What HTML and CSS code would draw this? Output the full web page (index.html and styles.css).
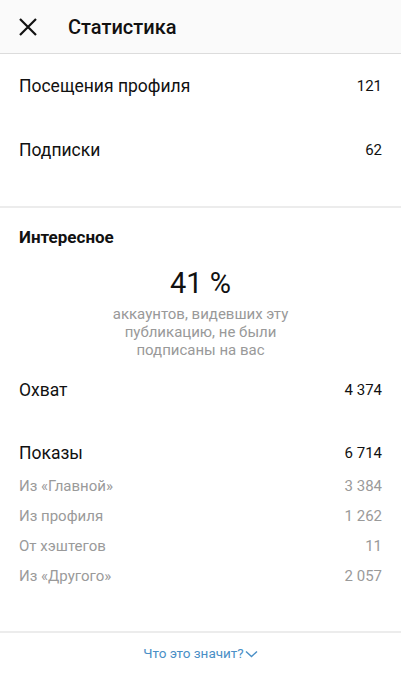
FILE: index.html
```html
<!DOCTYPE html>
<html lang="ru">
<head>
    <meta charset="UTF-8">
    <meta name="viewport" content="width=device-width, initial-scale=1.0">
    <title>Статистика</title>
    <link rel="stylesheet" href="styles.css">
</head>
<body>
    <div class="header">
        <svg class="close" width="20" height="20" viewBox="0 0 20 20">
            <path d="M2 2 L18 18 M18 2 L2 18" stroke="#111" stroke-width="2.2" fill="none"/>
        </svg>
        <h1>Статистика</h1>
    </div>

    <div class="section top">
        <div class="row">
            <span class="label">Посещения профиля</span>
            <span class="value">121</span>
        </div>
        <div class="row">
            <span class="label">Подписки</span>
            <span class="value">62</span>
        </div>
    </div>

    <div class="section discovery">
        <h2>Интересное</h2>
        <div class="percent">41 %</div>
        <p class="note">аккаунтов, видевших эту<br>публикацию, не были<br>подписаны на вас</p>

        <div class="line reach">
            <span class="label">Охват</span>
            <span class="value">4 374</span>
        </div>
        <div class="line shows">
            <span class="label">Показы</span>
            <span class="value">6 714</span>
        </div>
        <div class="sub">
            <span>Из «Главной»</span>
            <span>3 384</span>
        </div>
        <div class="sub">
            <span>Из профиля</span>
            <span>1 262</span>
        </div>
        <div class="sub">
            <span>От хэштегов</span>
            <span>11</span>
        </div>
        <div class="sub">
            <span>Из «Другого»</span>
            <span>2 057</span>
        </div>
    </div>

    <div class="more">
        <a href="#">Что это значит?<svg width="13" height="8" viewBox="0 0 13 8">
            <path d="M1 1.5 L6.5 6.5 L12 1.5" stroke="#4a8fc6" stroke-width="1.4" fill="none"/>
        </svg></a>
    </div>
</body>
</html>
```

FILE: styles.css
```css
body {
    margin: 0;
    font-family: Roboto, "Noto Sans", sans-serif;
    color: #111;
    background-color: #fff;
}
.header {
    height: 53px;
    display: flex;
    align-items: center;
    background-color: #fafafa;
    border-bottom: 1px solid #dcdcdc;
}
.close {
    margin-left: 18px;
    margin-top: 1px;
}
.header h1 {
    margin: 0 0 0 30px;
    font-size: 20px;
    font-weight: 500;
}
.section {
    padding: 0 19px 0 19px;
}
.top {
    padding-bottom: 24px;
    border-bottom: 2px solid #ececec;
}
.row {
    height: 64px;
    display: flex;
    justify-content: space-between;
    align-items: center;
}
.label {
    font-size: 17.5px;
}
.value {
    font-size: 15px;
}
.discovery {
    padding-top: 19px;
    padding-bottom: 40px;
    border-bottom: 2px solid #ececec;
}
.discovery h2 {
    margin: 0;
    font-size: 17px;
    line-height: 20px;
    font-weight: 700;
}
.percent {
    margin-top: 19px;
    text-align: center;
    font-size: 29px;
    line-height: 34px;
}
.note {
    margin: 5px 0 0;
    text-align: center;
    font-size: 15px;
    line-height: 18px;
    color: #999;
}
.line {
    display: flex;
    justify-content: space-between;
    align-items: center;
    line-height: 24px;
}
.reach {
    margin-top: 19px;
}
.shows {
    margin-top: 39px;
    margin-bottom: 6px;
}
.sub {
    display: flex;
    justify-content: space-between;
    font-size: 15px;
    line-height: 30px;
    color: #9a9a9a;
}
.more {
    padding-top: 10px;
    text-align: center;
    line-height: 20px;
}
.more a {
    font-size: 13.5px;
    color: #4a8fc6;
    text-decoration: none;
}
.more svg {
    margin-left: 1px;
}
```
